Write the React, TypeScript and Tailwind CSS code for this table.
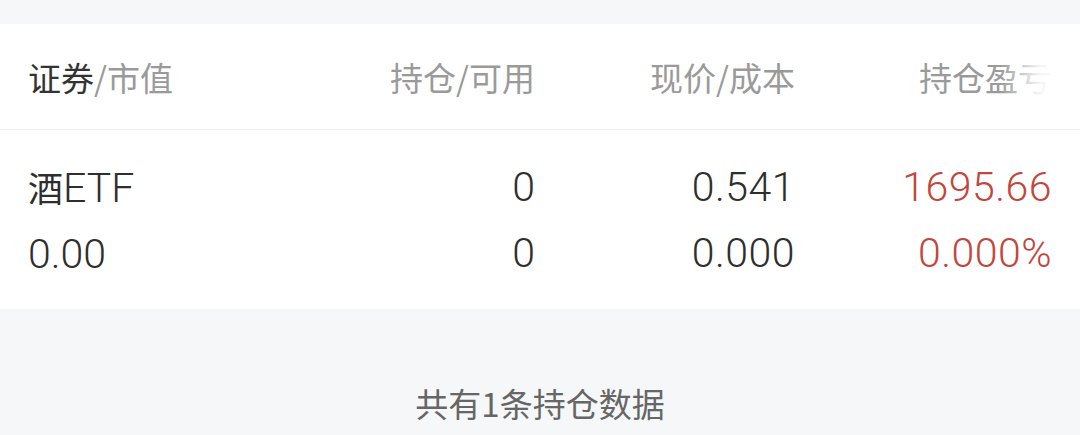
const cjk = "font-['Noto_Sans_CJK_SC',sans-serif]";
const num = "font-['Roboto','Noto_Sans_CJK_SC',sans-serif]";

const rows = [
  {
    name: "酒",
    suffix: "ETF",
    value: "0.00",
    hold: "0",
    avail: "0",
    price: "0.541",
    cost: "0.000",
    pl: "1695.66",
    plPct: "0.000%",
  },
];

function App() {
  return (
    <div className="w-[1080px] h-[435px] bg-[#f6f7f9] overflow-hidden">
      <div className="h-6" />

      {/* header */}
      <div
        className={`relative bg-white h-[106px] border-b border-[#f0f1f3] px-[28px] grid grid-cols-[256px_251px_260px_1fr] items-center text-[33px] leading-[40px] text-[#9a9a9a] ${cjk}`}
      >
        <div>
          <span className="text-[#333333]">证券</span>/市值
        </div>
        <div className="text-right">持仓/可用</div>
        <div className="text-right">现价/成本</div>
        <div className="text-right pr-[1px]">持仓盈亏</div>
        <div className="absolute right-0 top-0 h-full w-[80px] bg-gradient-to-r from-white/0 via-white/90 to-white" />
      </div>

      {/* rows */}
      {rows.map((r) => (
        <div
          key={r.name}
          className={`bg-white px-[28px] pt-[24px] pb-[22px] grid grid-cols-[256px_251px_260px_1fr] text-[41px] leading-[66px] font-light text-[#2e2e2e] ${num}`}
        >
          <div className="flex flex-col">
            <div>
              <span className={`${cjk} font-normal text-[35px]`}>{r.name}</span>
              {r.suffix}
            </div>
            <div>{r.value}</div>
          </div>
          <div className="flex flex-col items-end">
            <div>{r.hold}</div>
            <div>{r.avail}</div>
          </div>
          <div className="flex flex-col items-end tracking-[0.5px]">
            <div>{r.price}</div>
            <div>{r.cost}</div>
          </div>
          <div className="flex flex-col items-end text-[#c4453b] tracking-[0.5px]">
            <div>{r.pl}</div>
            <div>{r.plPct}</div>
          </div>
        </div>
      ))}

      <div
        className={`mt-[74px] text-center text-[33px] leading-[40px] text-[#666666] ${cjk}`}
      >
        共有1条持仓数据
      </div>
    </div>
  );
}

export default App;
